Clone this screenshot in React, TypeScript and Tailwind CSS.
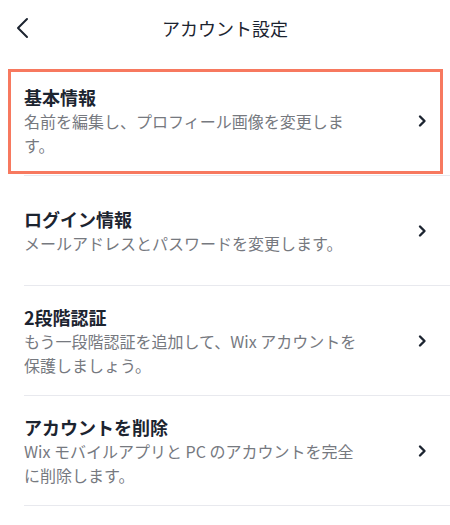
import React from "react";

const items = [
  {
    title: "基本情報",
    desc: "名前を編集し、プロフィール画像を変更します。",
    highlight: true,
  },
  {
    title: "ログイン情報",
    desc: "メールアドレスとパスワードを変更します。",
  },
  {
    title: "2段階認証",
    desc: "もう一段階認証を追加して、Wix アカウントを保護しましょう。",
  },
  {
    title: "アカウントを削除",
    desc: "Wix モバイルアプリと PC のアカウントを完全に削除します。",
  },
];

function Chevron() {
  return (
    <svg width="10" height="14" viewBox="0 0 10 14" fill="none">
      <path
        d="M3 2.5 L7.5 7 L3 11.5"
        stroke="#1c2430"
        strokeWidth="2.4"
        strokeLinecap="round"
        strokeLinejoin="round"
      />
    </svg>
  );
}

export default function App() {
  return (
    <div
      className="w-[450px] h-[525px] bg-white overflow-hidden"
      style={{ fontFamily: '"Noto Sans CJK JP", "Noto Sans", sans-serif' }}
    >
      {/* header */}
      <div className="h-[66px] grid grid-cols-[60px_1fr_60px] items-start pt-[14px]">
        <div className="pl-[15px] pt-[2px]">
          <svg width="14" height="24" viewBox="0 0 14 24" fill="none">
            <path
              d="M12 3 L3 12 L12 21"
              stroke="#1c2430"
              strokeWidth="2"
              strokeLinecap="round"
              strokeLinejoin="round"
            />
          </svg>
        </div>
        <div className="text-center text-[18px] leading-[28px] text-[#1c2430]">
          アカウント設定
        </div>
        <div />
      </div>

      {/* list */}
      <div>
        {items.map((it) => (
          <div key={it.title} className="relative">
            {it.highlight && (
              <div className="absolute left-2 top-[3px] w-[435px] h-[105px] border-[3px] border-[#f7795f]" />
            )}
            <div className="ml-6 h-[110px] border-b border-[#e8e9ee] flex items-center justify-between pr-[23px]">
              <div className="w-[340px]">
                <div className="text-[18px] leading-[24px] font-bold text-[#1c2430]">
                  {it.title}
                </div>
                <div className="text-[16px] leading-[24px] text-[#76797f]">
                  {it.desc}
                </div>
              </div>
              <Chevron />
            </div>
          </div>
        ))}
      </div>
    </div>
  );
}
